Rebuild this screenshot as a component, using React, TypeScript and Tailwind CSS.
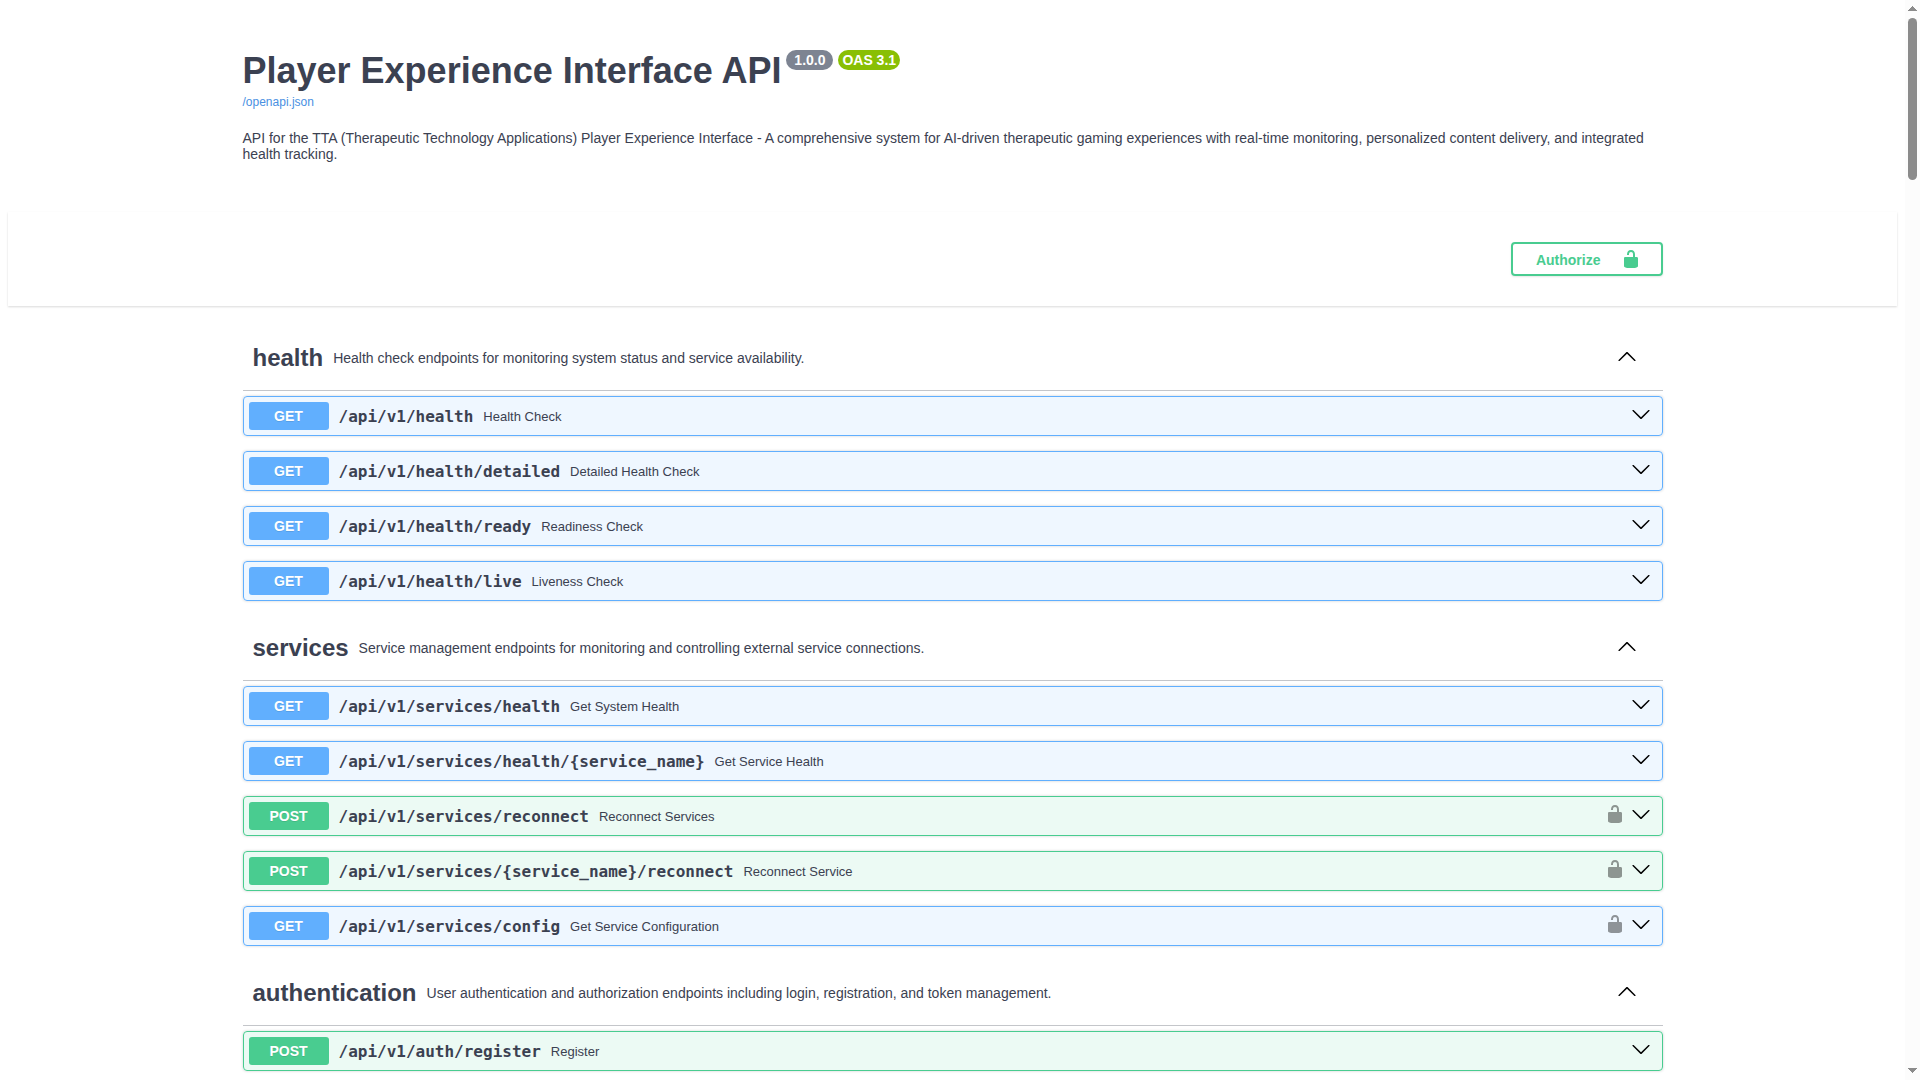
type Method = 'GET' | 'POST';

interface Operation {
  method: Method;
  path: string;
  summary: string;
  locked?: boolean;
}

interface Tag {
  name: string;
  description: string;
  operations: Operation[];
}

const tags: Tag[] = [
  {
    name: 'health',
    description: 'Health check endpoints for monitoring system status and service availability.',
    operations: [
      { method: 'GET', path: '/api/v1/health', summary: 'Health Check' },
      { method: 'GET', path: '/api/v1/health/detailed', summary: 'Detailed Health Check' },
      { method: 'GET', path: '/api/v1/health/ready', summary: 'Readiness Check' },
      { method: 'GET', path: '/api/v1/health/live', summary: 'Liveness Check' },
    ],
  },
  {
    name: 'services',
    description: 'Service management endpoints for monitoring and controlling external service connections.',
    operations: [
      { method: 'GET', path: '/api/v1/services/health', summary: 'Get System Health' },
      { method: 'GET', path: '/api/v1/services/health/{service_name}', summary: 'Get Service Health' },
      { method: 'POST', path: '/api/v1/services/reconnect', summary: 'Reconnect Services', locked: true },
      { method: 'POST', path: '/api/v1/services/{service_name}/reconnect', summary: 'Reconnect Service', locked: true },
      { method: 'GET', path: '/api/v1/services/config', summary: 'Get Service Configuration', locked: true },
    ],
  },
  {
    name: 'authentication',
    description: 'User authentication and authorization endpoints including login, registration, and token management.',
    operations: [{ method: 'POST', path: '/api/v1/auth/register', summary: 'Register' }],
  },
];

const rowStyle: Record<Method, string> = {
  GET: 'border-[#61affe] bg-[#61affe]/10',
  POST: 'border-[#49cc90] bg-[#49cc90]/10',
};

const methodStyle: Record<Method, string> = {
  GET: 'bg-[#61affe]',
  POST: 'bg-[#49cc90]',
};

function UnlockIcon({ className }: { className: string }) {
  return (
    <svg viewBox="0 0 20 20" width="20" height="20" fill="currentColor" className={className}>
      <path d="M15.8 8H14V5.6C14 2.703 12.665 1 10 1 7.334 1 6 2.703 6 5.6V6h2v-.801C8 3.754 8.797 3 10 3c1.203 0 2 .754 2 2.199V8H4c-.553 0-1 .646-1 1.199V17c0 .549.428 1.139.951 1.307l1.197.387C5.672 18.861 6.55 19 7.1 19h5.8c.549 0 1.428-.139 1.951-.307l1.196-.387c.524-.167.953-.757.953-1.306V9.199C17 8.646 16.352 8 15.8 8z" />
    </svg>
  );
}

function ArrowUp() {
  return (
    <svg viewBox="0 0 20 20" width="20" height="20" className="mb-[5px] shrink-0">
      <path d="M17.418 14.908c.272.268.709.268.979 0s.271-.701 0-.969l-7.908-7.83c-.27-.268-.707-.268-.979 0l-7.908 7.83c-.27.268-.27.701 0 .969.271.268.709.268.979 0L10 7.767l7.418 7.141z" />
    </svg>
  );
}

function ArrowDown() {
  return (
    <svg viewBox="0 0 20 20" width="20" height="20" className="mb-1 shrink-0">
      <path d="M17.418 6.109c.272-.268.709-.268.979 0s.271.701 0 .969l-7.908 7.83c-.27.268-.707.268-.979 0l-7.908-7.83c-.27-.268-.27-.701 0-.969.271-.268.709-.268.979 0L10 13.25l7.418-7.141z" />
    </svg>
  );
}

function OperationRow({ op }: { op: Operation }) {
  return (
    <div
      className={`mb-[15px] flex h-10 items-center rounded border p-[5px] shadow-[0_0_3px_rgba(0,0,0,0.19)] ${rowStyle[op.method]}`}
    >
      <span
        className={`flex h-7 w-20 shrink-0 items-center justify-center rounded-[3px] text-sm leading-4 font-bold text-white [text-shadow:0_1px_0_rgba(0,0,0,0.1)] ${methodStyle[op.method]}`}
      >
        {op.method}
      </span>
      <span className="px-2.5 font-['DejaVu_Sans_Mono',monospace] text-base leading-[19px] font-semibold">{op.path}</span>
      <span className="grow text-[13px] leading-[15px]">{op.summary}</span>
      {op.locked && <UnlockIcon className="mr-1.5 mb-1 shrink-0 text-black opacity-40" />}
      <div className="pr-1.5">
        <ArrowDown />
      </div>
    </div>
  );
}

function TagSection({ tag }: { tag: Tag }) {
  return (
    <section>
      <h3 className="mb-[5px] flex h-[65px] items-center border-b border-[#3b4151]/30 pr-[26px] pl-2.5">
        <span className="text-2xl leading-7 font-bold">{tag.name}</span>
        <span className="grow px-2.5 text-sm leading-4">{tag.description}</span>
        <ArrowUp />
      </h3>
      {tag.operations.map((op) => (
        <OperationRow key={op.path} op={op} />
      ))}
    </section>
  );
}

function Scrollbar() {
  return (
    <div className="flex w-[15px] shrink-0 flex-col items-center bg-[#fcfcfc] pt-1.5 pb-[7px]">
      <svg width="9" height="5" viewBox="0 0 9 5" shapeRendering="crispEdges">
        <path d="M0 5L4.5 0L9 5z" fill="#8b8b8b" />
      </svg>
      <div className="mt-[7px] h-[162px] w-[9px] rounded-full bg-[#8b8b8b]" />
      <svg width="9" height="5" viewBox="0 0 9 5" shapeRendering="crispEdges" className="mt-auto">
        <path d="M0 0L4.5 5L9 0z" fill="#8b8b8b" />
      </svg>
    </div>
  );
}

export default function App() {
  return (
    <div className="flex h-[1080px] overflow-hidden bg-white font-['Liberation_Sans',Arial,sans-serif] text-[#3b4151]">
      <main className="grow px-2">
        <header className="mx-auto h-[212px] w-[1420px] pt-[50px]">
          <div className="flex items-start">
            <h1 className="pt-px text-4xl leading-10 font-bold whitespace-nowrap">Player Experience Interface API</h1>
            <div className="ml-[5px] flex gap-[5px] text-sm leading-4 font-bold text-white">
              <span className="rounded-full bg-[#7d8492] px-[7.9px] py-0.5">1.0.0</span>
              <span className="rounded-full bg-[#89bf04] px-1 py-0.5">OAS 3.1</span>
            </div>
          </div>
          <a className="mt-1 block text-xs leading-[14px] text-[#4990e2]">/openapi.json</a>
          <p className="mt-[21px] text-sm leading-4">
            API for the TTA (Therapeutic Technology Applications) Player Experience Interface - A comprehensive system for
            AI-driven therapeutic gaming experiences with real-time monitoring, personalized content delivery, and
            integrated health tracking.
          </p>
        </header>

        <div className="mb-5 bg-white py-[30px] shadow-[0_1px_2px_rgba(0,0,0,0.15)]">
          <div className="mx-auto flex w-[1420px] justify-end">
            <button className="flex h-[34px] items-center rounded border-2 border-[#49cc90] pr-5 pl-[23px] text-sm leading-4 font-bold text-[#49cc90] shadow-[0_1px_2px_rgba(0,0,0,0.1)]">
              <span className="pt-0.5 pr-5">Authorize</span>
              <UnlockIcon className="shrink-0" />
            </button>
          </div>
        </div>

        <div className="mx-auto w-[1420px]">
          {tags.map((tag) => (
            <TagSection key={tag.name} tag={tag} />
          ))}
        </div>
      </main>
      <Scrollbar />
    </div>
  );
}
